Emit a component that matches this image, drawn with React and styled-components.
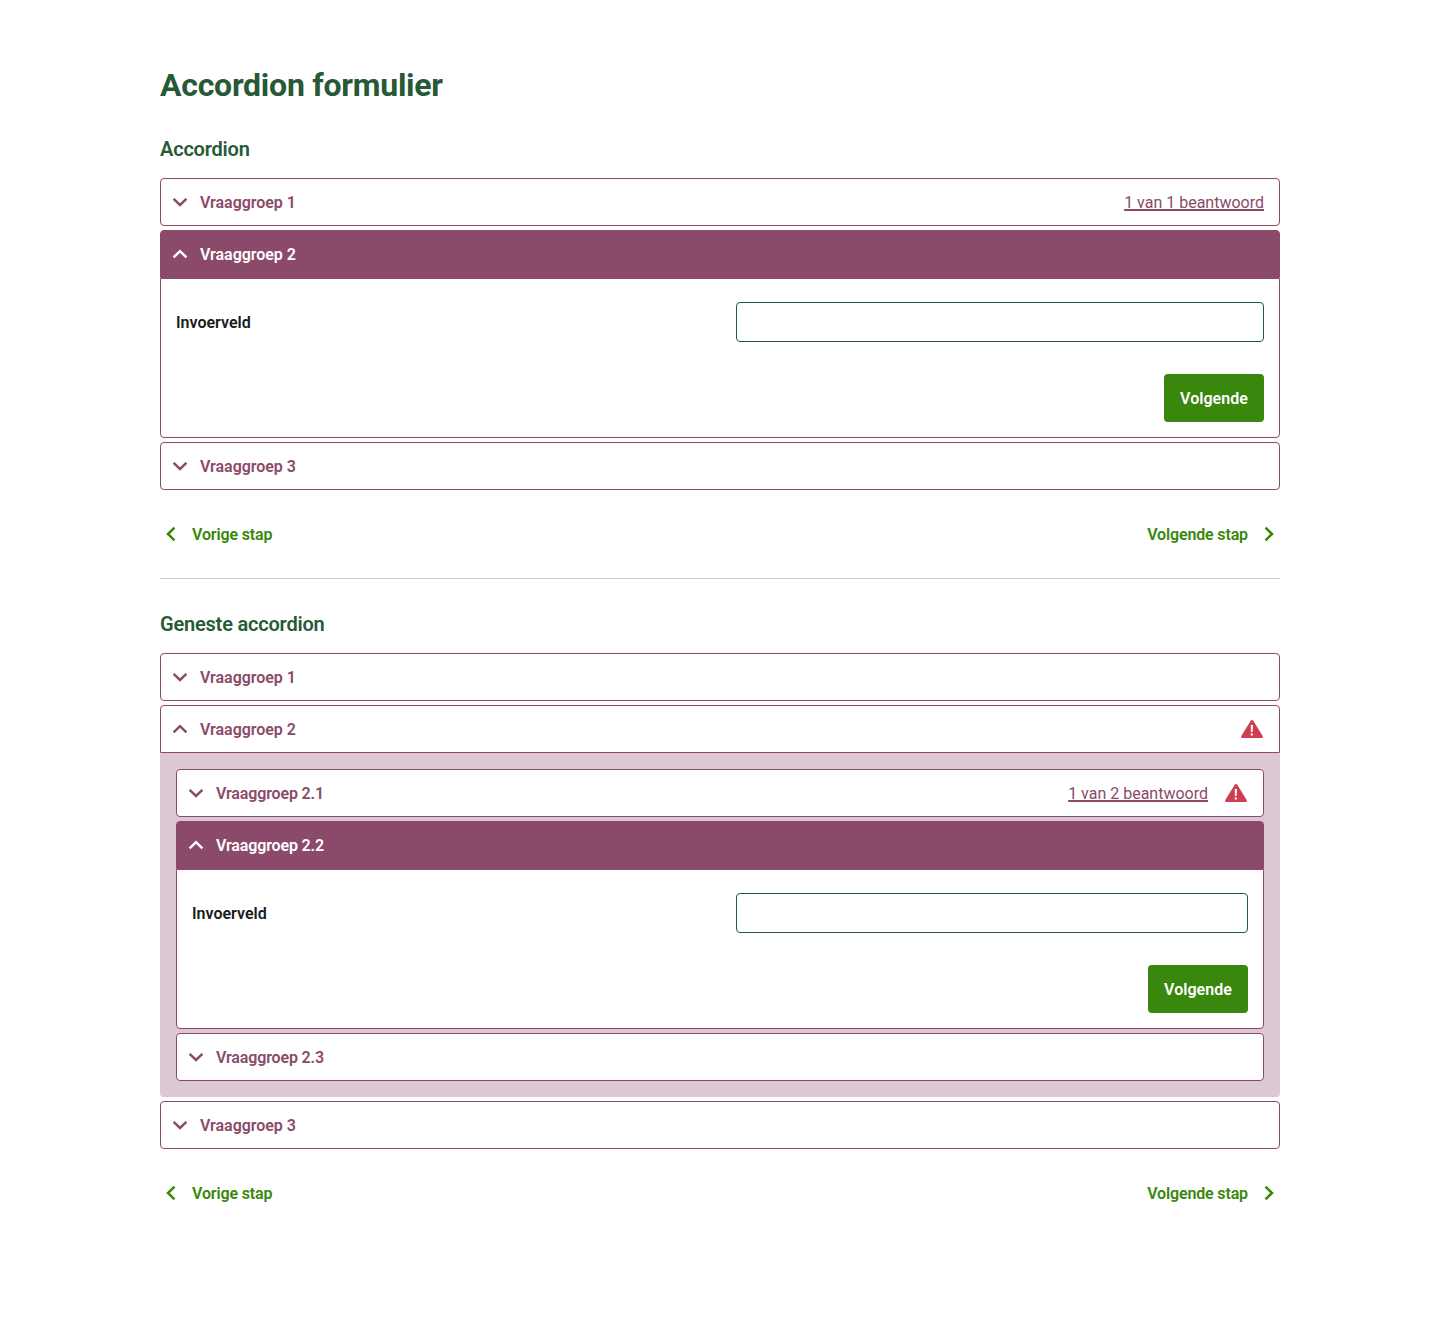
import React from 'react';
import styled, { createGlobalStyle, css } from 'styled-components';

const color = {
  plum: '#8b4a6a',
  plumLight: '#dcc8d3',
  green: '#39870c',
  forest: '#275937',
  danger: '#ce3f51',
  ink: '#1a1a1a',
  line: '#cccccc',
};

const GlobalStyle = createGlobalStyle`
  *, *::before, *::after { box-sizing: border-box; }
  body {
    margin: 0;
    background: #fff;
    color: ${color.ink};
    font-family: Roboto, 'Open Sans', sans-serif;
    font-size: 16px;
    line-height: 24px;
  }
`;

const Page = styled.main`
  width: 1120px;
  margin: 0 auto;
  padding: 65px 0 101px;
`;

const Title = styled.h1`
  margin: 0 0 31px;
  color: ${color.forest};
  font-size: 32px;
  font-weight: 700;
  letter-spacing: -0.25px;
  line-height: 41px;
`;

const Subtitle = styled.h2`
  margin: 0 0 17px;
  color: ${color.forest};
  font-size: 20px;
  font-weight: 600;
  letter-spacing: -0.2px;
  line-height: 24px;
`;

const AccordionList = styled.div`
  display: flex;
  flex-direction: column;
  gap: 4px;
`;

const Item = styled.section`
  display: flex;
  flex-direction: column;
`;

const Header = styled.button`
  display: flex;
  align-items: center;
  gap: 8px;
  width: 100%;
  height: 48px;
  padding: 0 15px 0 7px;
  border: 1px solid ${color.plum};
  border-radius: ${(p) => (p.$open ? '4px 4px 0 0' : '4px')};
  background: ${(p) => (p.$filled ? color.plum : '#fff')};
  color: ${(p) => (p.$filled ? '#fff' : color.plum)};
  font: inherit;
  font-weight: 600;
  text-align: left;
  cursor: pointer;
`;

const HeaderLabel = styled.span`
  flex: 1;
  padding-top: 2px;
  letter-spacing: ${(p) => (p.$long ? '-0.15px' : '-0.04px')};
`;

const HeaderStatus = styled.span`
  display: flex;
  align-items: center;
  gap: 16px;
`;

const Answered = styled.span`
  padding-top: 2px;
  font-weight: 400;
  text-decoration: underline;
  text-decoration-thickness: 2px;
  text-underline-offset: 1px;
  text-decoration-skip-ink: none;
`;

const Body = styled.div`
  border-radius: 0 0 4px 4px;
  ${(p) =>
    p.$nested
      ? css`
          padding: 16px;
          background: ${color.plumLight};
        `
      : css`
          display: flex;
          flex-direction: column;
          align-items: flex-end;
          gap: 32px;
          padding: 23px 15px 15px;
          border: 1px solid ${color.plum};
          background: #fff;
        `}
`;

const Field = styled.label`
  display: grid;
  grid-template-columns: 1fr 1fr;
  column-gap: 32px;
  align-items: center;
  width: 100%;
  font-weight: 600;
`;

const FieldLabel = styled.span`
  padding-top: 2px;
`;

const Input = styled.input`
  width: 100%;
  height: 40px;
  padding: 0 12px;
  border: 1px solid ${color.forest};
  border-radius: 4px;
  background: #fff;
  font: inherit;
`;

const PrimaryButton = styled.button`
  width: 100px;
  height: 48px;
  padding: 2px 0 0;
  border: 0;
  border-radius: 4px;
  background: ${color.green};
  color: #fff;
  font: inherit;
  font-weight: 600;
  letter-spacing: 0.04px;
  cursor: pointer;
`;

const StepNav = styled.nav`
  display: flex;
  justify-content: space-between;
  margin-top: 20px;
`;

const StepLink = styled.button`
  display: flex;
  align-items: center;
  gap: 10px;
  height: 48px;
  padding: 0;
  border: 0;
  background: none;
  color: ${color.green};
  font: inherit;
  font-weight: 600;
  letter-spacing: -0.14px;
  cursor: pointer;
`;

const StepText = styled.span`
  padding-top: 2px;
`;

const Divider = styled.hr`
  height: 1px;
  margin: 20px 0 33px;
  border: 0;
  background: ${color.line};
`;

const Icon = styled.svg`
  display: block;
  flex: none;
`;

function ChevronVertical({ up }) {
  return (
    <Icon width="24" height="24" viewBox="0 0 24 24" fill="none" aria-hidden="true">
      <path
        d={up ? 'M5.6 15.3 12 9.2l6.4 6.1' : 'M5.6 8.9 12 15l6.4-6.1'}
        stroke="currentColor"
        strokeWidth="2.5"
      />
    </Icon>
  );
}

function ChevronHorizontal({ left }) {
  return (
    <Icon width="22" height="24" viewBox="0 0 22 24" fill="none" aria-hidden="true">
      <path
        d={left ? 'M14.5 5.6 8 12l6.5 6.4' : 'M7.5 5.6 14 12l-6.5 6.4'}
        stroke="currentColor"
        strokeWidth="2.5"
      />
    </Icon>
  );
}

function WarningIcon() {
  return (
    <Icon width="24" height="24" viewBox="0 0 24 24" aria-label="Fout">
      <path
        d="M10.7 3.8a1.5 1.5 0 0 1 2.6 0l9.4 15.3c.6 1-.1 1.9-1 1.9H2.3c-.9 0-1.6-.9-1-1.9Z"
        fill={color.danger}
      />
      <path d="M10.7 8h2.2l-.3 7h-1.6Z" fill="#fff" />
      <circle cx="11.8" cy="17.4" r="1.2" fill="#fff" />
    </Icon>
  );
}

function AccordionItem({ label, open, filled, nested, answered, warning, children }) {
  return (
    <Item>
      <Header type="button" aria-expanded={!!open} $open={open} $filled={filled}>
        <ChevronVertical up={open} />
        <HeaderLabel $long={label.includes('.')}>{label}</HeaderLabel>
        <HeaderStatus>
          {answered && <Answered>{answered}</Answered>}
          {warning && <WarningIcon />}
        </HeaderStatus>
      </Header>
      {open && <Body $nested={nested}>{children}</Body>}
    </Item>
  );
}

function QuestionForm() {
  return (
    <>
      <Field>
        <FieldLabel>Invoerveld</FieldLabel>
        <Input type="text" />
      </Field>
      <PrimaryButton type="button">Volgende</PrimaryButton>
    </>
  );
}

function Steps() {
  return (
    <StepNav>
      <StepLink type="button">
        <ChevronHorizontal left />
        <StepText>Vorige stap</StepText>
      </StepLink>
      <StepLink type="button">
        <StepText>Volgende stap</StepText>
        <ChevronHorizontal />
      </StepLink>
    </StepNav>
  );
}

export default function App() {
  return (
    <Page>
      <GlobalStyle />
      <Title>Accordion formulier</Title>

      <Subtitle>Accordion</Subtitle>
      <AccordionList>
        <AccordionItem label="Vraaggroep 1" answered="1 van 1 beantwoord" />
        <AccordionItem label="Vraaggroep 2" open filled>
          <QuestionForm />
        </AccordionItem>
        <AccordionItem label="Vraaggroep 3" />
      </AccordionList>
      <Steps />

      <Divider />

      <Subtitle>Geneste accordion</Subtitle>
      <AccordionList>
        <AccordionItem label="Vraaggroep 1" />
        <AccordionItem label="Vraaggroep 2" open nested warning>
          <AccordionList>
            <AccordionItem label="Vraaggroep 2.1" answered="1 van 2 beantwoord" warning />
            <AccordionItem label="Vraaggroep 2.2" open filled>
              <QuestionForm />
            </AccordionItem>
            <AccordionItem label="Vraaggroep 2.3" />
          </AccordionList>
        </AccordionItem>
        <AccordionItem label="Vraaggroep 3" />
      </AccordionList>
      <Steps />
    </Page>
  );
}
